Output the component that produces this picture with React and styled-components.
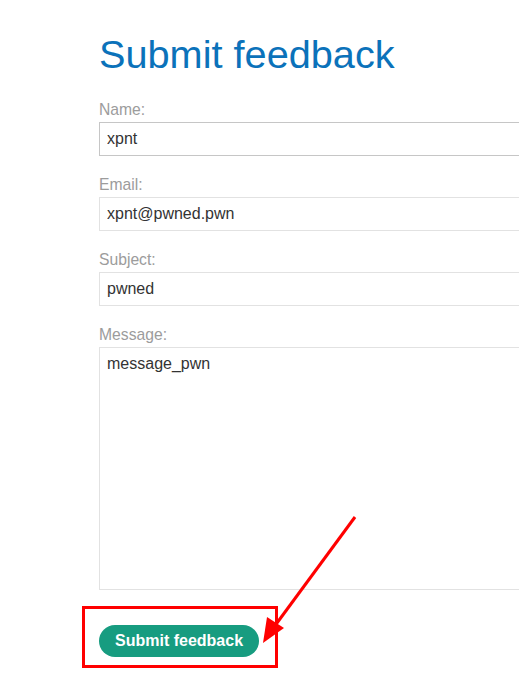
import React from "react";
import styled, { createGlobalStyle } from "styled-components";

const GlobalStyle = createGlobalStyle`
  html, body {
    margin: 0;
    padding: 0;
    background: #fff;
  }
  body {
    font-family: "Liberation Sans", Arial, sans-serif;
    color: #333;
  }
`;

const Page = styled.div`
  position: relative;
  width: 519px;
  height: 686px;
  overflow: hidden;
  padding-left: 99px;
  box-sizing: border-box;
`;

const Title = styled.h1`
  margin: 32px 0 24px;
  font-size: 39.7px;
  line-height: 44px;
  font-weight: 400;
  color: #0b72ba;
`;

const Form = styled.form`
  display: flex;
  flex-direction: column;
  width: 520px;
`;

const Field = styled.div`
  display: flex;
  flex-direction: column;
  gap: 2px;
  margin-bottom: 19px;
`;

const Label = styled.label`
  font-size: 15.7px;
  line-height: 20px;
  color: #9c9c9c;
`;

const Input = styled.input`
  box-sizing: border-box;
  height: 34px;
  padding: 0 7px;
  border: 1px solid ${({ $active }) => ($active ? "#c6c6c6" : "#e2e2e2")};
  font-family: inherit;
  font-size: 16px;
  color: #333;
  outline: none;
  background: #fff;
`;

const TextArea = styled.textarea`
  box-sizing: border-box;
  height: 243px;
  padding: 6px 7px;
  border: 1px solid #e2e2e2;
  font-family: inherit;
  font-size: 16px;
  line-height: 20px;
  color: #333;
  resize: none;
  outline: none;
`;

const Button = styled.button`
  align-self: flex-start;
  margin-top: 16px;
  padding: 6px 16px;
  border: none;
  border-radius: 16px;
  background: #179c80;
  color: #fff;
  font-family: inherit;
  font-size: 16px;
  line-height: 20px;
  font-weight: 700;
  cursor: pointer;
`;

const Highlight = styled.div`
  position: absolute;
  left: 82px;
  top: 606px;
  width: 196px;
  height: 62px;
  box-sizing: border-box;
  border: 3px solid #ff0000;
  pointer-events: none;
`;

const Annotation = styled.svg`
  position: absolute;
  left: 0;
  top: 0;
  pointer-events: none;
`;

const fields = [
  { label: "Name:", value: "xpnt", active: true },
  { label: "Email:", value: "xpnt@pwned.pwn" },
  { label: "Subject:", value: "pwned" },
];

export default function App() {
  return (
    <>
      <GlobalStyle />
      <Page>
        <Title>Submit feedback</Title>
        <Form onSubmit={(e) => e.preventDefault()}>
          {fields.map((f) => (
            <Field key={f.label}>
              <Label>{f.label}</Label>
              <Input defaultValue={f.value} $active={f.active} />
            </Field>
          ))}
          <Field>
            <Label>Message:</Label>
            <TextArea defaultValue="message_pwn" />
          </Field>
          <Button type="submit">Submit feedback</Button>
        </Form>
        <Highlight />
        <Annotation width="519" height="686" viewBox="0 0 519 686">
          <line x1="355" y1="517" x2="274" y2="627" stroke="#ff0000" strokeWidth="3" />
          <polygon points="263,643 267,617 284,628" fill="#ff0000" />
        </Annotation>
      </Page>
    </>
  );
}
